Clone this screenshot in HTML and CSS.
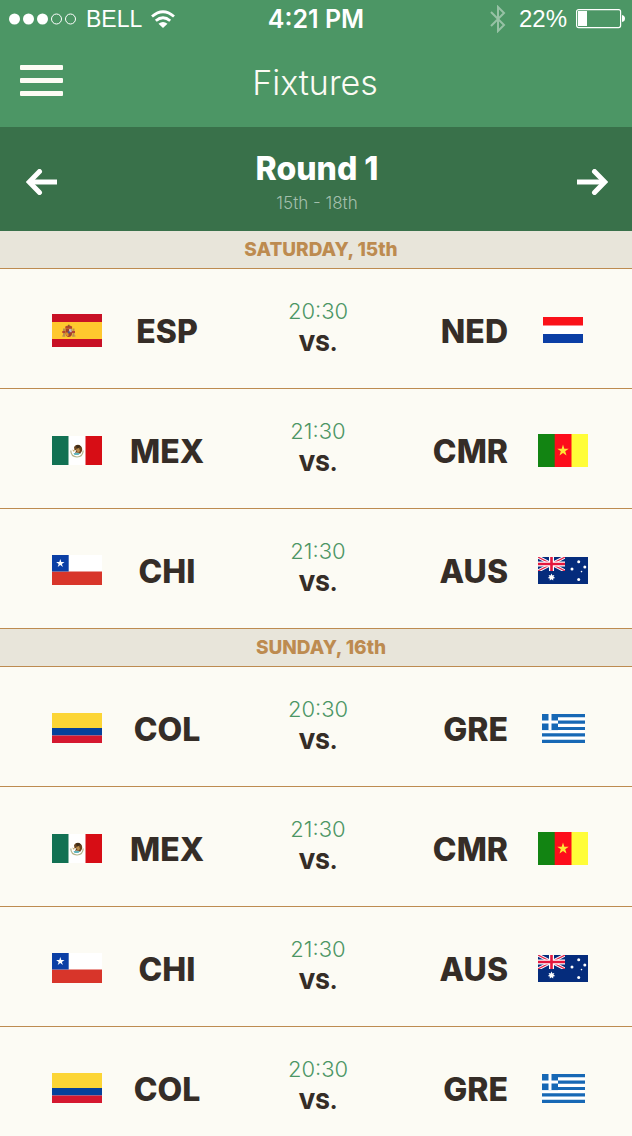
FILE: index.html
```
<!DOCTYPE html>
<html lang="en">
<head>
<meta charset="utf-8">
<meta name="viewport" content="width=device-width, initial-scale=1">
<title>Fixtures</title>
<link rel="stylesheet" href="styles.css">
</head>
<body>
<svg class="sprite" width="0" height="0" aria-hidden="true">
  <symbol id="esp" viewBox="0 0 50 33">
    <path fill="#c81125" d="M0 0h50v33H0z"/>
    <path fill="#ffc82e" d="M0 8h50v17H0z"/>
    <path fill="#b98f4e" d="M11 14.500h2v8h-2zM20.500 14.500h2v8h-2z"/>
    <path fill="#b5452f" d="M10.300 17h3v2h-3zM20 17h3v2h-3zM13.300 12.500q3.400-2.200 6.800 0v2h-6.800z"/>
    <path fill="#a3402c" d="M13.500 14.500h6.500v5.500q-.5 3-3.200 3t-3.300-3z"/>
    <path fill="#c9b9bb" d="M17 15h2.700v3.200H17z"/>
    <path fill="#d9962c" d="M13.800 18.500h2.700v3.500h-1.500q-1.200-1-1.200-3.500z"/>
    <path fill="#4c5a8c" d="M15.800 17.300h2v2h-2z"/>
    <path fill="#8a5a2a" d="M16 10.800h1.500v2H16z"/>
    <path fill="#b98f4e" d="M10 21.500h3.500v1H10zM20 21.500h3.500v1H20z"/>
  </symbol>
  <symbol id="ned" viewBox="0 0 40 26">
    <path fill="#fff" d="M0 0h40v26H0z"/>
    <path fill="#fa1119" d="M0 0h40v8.500H0z"/>
    <path fill="#0b3ea5" d="M0 17h40v9H0z"/>
  </symbol>
  <symbol id="mex" viewBox="0 0 50 29">
    <path fill="#fff" d="M0 0h50v29H0z"/>
    <path fill="#127153" d="M0 0h16.500v29H0z"/>
    <path fill="#d70d15" d="M33.500 0H50v29H33.500z"/>
    <path fill="none" stroke="#b3b58c" stroke-width="1.200" d="M18.800 14.500q0 6 6.200 6.500 6-.5 6.200-6.500"/>
    <path fill="#6b4520" d="M22 11q2-3 5.500-2 3.500 2 2.500 6l-2 3-3-1.500-2 .5 1.500-3-2 .5z"/>
    <path fill="#3c2b18" d="M24 9.500q3-1.500 5 1.500l-2 .5-2 2z"/>
    <path fill="#b98c4c" d="M24 13l3-1 1 3-2 2z"/>
    <path fill="#63b6bd" d="M21.500 17h6.500l-1.500 2h-4z"/>
    <path fill="#c9a65c" d="M20 13.500l2.500 1-.5 1.500z"/>
  </symbol>
  <symbol id="cmr" viewBox="0 0 50 33">
    <path fill="#128412" d="M0 0h17v33H0z"/>
    <path fill="#fd0d1b" d="M16.700 0H34v33H16.700z"/>
    <path fill="#fffd38" d="M33.500 0H50v33H33.500z"/>
    <path fill="#ffe635" d="M25 10.500l1.300 4.200h4.400l-3.500 2.600 1.300 4.200-3.500-2.600-3.500 2.600 1.300-4.200-3.500-2.600h4.400z"/>
  </symbol>
  <symbol id="chi" viewBox="0 0 50 30">
    <path fill="#fff" d="M0 0h50v30H0z"/>
    <path fill="#d8352a" d="M0 16.500h50V30H0z"/>
    <path fill="#0b3fa5" d="M0 0h16.700v16.500H0z"/>
    <path fill="#fff" d="M8.300 4l1 3h3.200l-2.600 1.900 1 3.100-2.600-1.900L5.700 12l1-3.100L4.100 7h3.200z"/>
  </symbol>
  <symbol id="aus" viewBox="0 0 50 27">
    <path fill="#052c7c" d="M0 0h50v27H0z"/>
    <svg width="27" height="14" viewBox="0 0 27 14">
      <path stroke="#fff" stroke-width="3.200" d="M0 0l27 14M27 0L0 14"/>
      <path stroke="#e4244a" stroke-width="1.200" d="M0 0l27 14M27 0L0 14"/>
      <path stroke="#fff" stroke-width="5" d="M13.500 0v14M0 7h27"/>
      <path stroke="#e4173d" stroke-width="2.600" d="M13.500 0v14M0 7h27"/>
    </svg>
    <path fill="#fff" d="M13.500 16.500l.9 1.900 2-.5-.9 1.900 1.700 1.200-2 .5v2.100l-1.700-1.300-1.700 1.300v-2.100l-2-.5 1.700-1.200-.9-1.900 2 .5z"/>
    <circle cx="40.700" cy="4.700" r="1.500" fill="#fff"/>
    <circle cx="34" cy="12" r="1.500" fill="#fff"/>
    <circle cx="46.800" cy="10" r="1.500" fill="#fff"/>
    <circle cx="43.500" cy="14.600" r=".8" fill="#fff"/>
    <circle cx="40.700" cy="22.600" r="1.500" fill="#fff"/>
  </symbol>
  <symbol id="col" viewBox="0 0 50 30">
    <path fill="#fcd535" d="M0 0h50v15H0z"/>
    <path fill="#06419b" d="M0 15h50v7.500H0z"/>
    <path fill="#d5182f" d="M0 22.500h50V30H0z"/>
  </symbol>
  <symbol id="gre" viewBox="0 0 43 29">
    <path fill="#fff" d="M0 0h43v29H0z"/>
    <path stroke="#1768b5" stroke-width="3.200" d="M0 1.600h43M0 8.050h43M0 14.500h43M0 20.950h43M0 27.400h43"/>
    <path fill="#1768b5" d="M0 0h16v16.100H0z"/>
    <path stroke="#fff" stroke-width="3" d="M8 0v16.100M0 8h16"/>
  </symbol>
</svg>

<div class="app">
  <header class="topbar">
    <div class="status">
      <div class="status-left">
        <svg width="68" height="12" viewBox="0 0 68 12" role="img" aria-label="Signal strength">
          <g fill="#fff"><circle cx="5.500" cy="6" r="5.500"/><circle cx="19.500" cy="6" r="5.500"/><circle cx="33.500" cy="6" r="5.500"/></g>
          <g fill="none" stroke="#fff"><circle cx="47.500" cy="6" r="5"/><circle cx="61.500" cy="6" r="5"/></g>
        </svg>
        <span class="carrier">BELL</span>
        <svg width="24" height="18" viewBox="0 0 24 18" role="img" aria-label="Wi-Fi">
          <g fill="none" stroke="#fff" stroke-width="2.800"><path d="M1 6.500q11-9.500 22 0"/><path d="M4.800 10.800q7.200-6.200 14.400 0"/></g>
          <path fill="#fff" d="M7.500 13.700q4.500-3.600 9 0L12 18z"/>
        </svg>
      </div>
      <span class="clock">4:21 PM</span>
      <div class="status-right">
        <svg width="20" height="28" viewBox="0 0 20 28" role="img" aria-label="Bluetooth">
          <path fill="none" stroke="#fff" stroke-opacity=".42" stroke-width="2" d="M1 7l13 13-6 6V2l6 6L1 21"/>
        </svg>
        <span>22%</span>
        <svg width="50" height="20" viewBox="0 0 50 20" role="img" aria-label="Battery">
          <rect x=".6" y=".6" width="44" height="18" rx="2" fill="none" stroke="#fff" stroke-width="1.200"/>
          <path fill="#fff" d="M2 2h9v15H2zM46 6q3 .5 3 3.500T46 13z"/>
        </svg>
      </div>
    </div>
    <div class="nav">
      <button class="icon-button" type="button" aria-label="Menu">
        <svg width="43" height="31" viewBox="0 0 43 31"><g fill="#fcfbf4"><rect width="43" height="5" rx="1"/><rect y="13" width="43" height="5" rx="1"/><rect y="26" width="43" height="5" rx="1"/></g></svg>
      </button>
      <h1 class="title">Fixtures</h1>
    </div>
  </header>

  <section class="round">
    <button class="icon-button" type="button" aria-label="Previous round">
      <svg width="32" height="26" viewBox="0 0 32 26"><path fill="none" stroke="#fff" stroke-width="5" d="M31 13H5"/><path fill="none" stroke="#fff" stroke-width="5" stroke-linecap="round" d="M13.500 2.500L3.200 13l10.300 10.500"/></svg>
    </button>
    <div class="round-label">
      <h2 class="round-name">Round 1</h2>
      <p class="round-dates">15th - 18th</p>
    </div>
    <button class="icon-button" type="button" aria-label="Next round">
      <svg width="32" height="26" viewBox="0 0 32 26"><path fill="none" stroke="#fff" stroke-width="5" d="M1 13h26"/><path fill="none" stroke="#fff" stroke-width="5" stroke-linecap="round" d="M18.500 2.500L28.800 13 18.500 23.500"/></svg>
    </button>
  </section>

  <main class="fixtures">
    <section>
      <h3 class="day">SATURDAY, 15th</h3>
      <ul class="matches">
        <li class="match">
          <svg class="flag" width="50" height="33"><use href="#esp"/></svg><span class="team">ESP</span>
          <div class="kickoff"><time>20:30</time><b>VS.</b></div>
          <span class="team away">NED</span><svg class="flag" width="40" height="26"><use href="#ned"/></svg>
        </li>
        <li class="match">
          <svg class="flag" width="50" height="29"><use href="#mex"/></svg><span class="team">MEX</span>
          <div class="kickoff"><time>21:30</time><b>VS.</b></div>
          <span class="team away">CMR</span><svg class="flag" width="50" height="33"><use href="#cmr"/></svg>
        </li>
        <li class="match">
          <svg class="flag" width="50" height="30"><use href="#chi"/></svg><span class="team">CHI</span>
          <div class="kickoff"><time>21:30</time><b>VS.</b></div>
          <span class="team away">AUS</span><svg class="flag" width="50" height="27"><use href="#aus"/></svg>
        </li>
      </ul>
    </section>
    <section>
      <h3 class="day">SUNDAY, 16th</h3>
      <ul class="matches">
        <li class="match">
          <svg class="flag" width="50" height="30"><use href="#col"/></svg><span class="team">COL</span>
          <div class="kickoff"><time>20:30</time><b>VS.</b></div>
          <span class="team away">GRE</span><svg class="flag" width="43" height="29"><use href="#gre"/></svg>
        </li>
        <li class="match">
          <svg class="flag" width="50" height="29"><use href="#mex"/></svg><span class="team">MEX</span>
          <div class="kickoff"><time>21:30</time><b>VS.</b></div>
          <span class="team away">CMR</span><svg class="flag" width="50" height="33"><use href="#cmr"/></svg>
        </li>
        <li class="match">
          <svg class="flag" width="50" height="30"><use href="#chi"/></svg><span class="team">CHI</span>
          <div class="kickoff"><time>21:30</time><b>VS.</b></div>
          <span class="team away">AUS</span><svg class="flag" width="50" height="27"><use href="#aus"/></svg>
        </li>
        <li class="match">
          <svg class="flag" width="50" height="30"><use href="#col"/></svg><span class="team">COL</span>
          <div class="kickoff"><time>20:30</time><b>VS.</b></div>
          <span class="team away">GRE</span><svg class="flag" width="43" height="29"><use href="#gre"/></svg>
        </li>
      </ul>
    </section>
  </main>
</div>
</body>
</html>
```
FILE: styles.css
```
* {
  box-sizing: border-box;
}

body,
h1,
h2,
h3,
p,
ul {
  margin: 0;
  padding: 0;
}

body {
  font-family: Inter, "Liberation Sans", sans-serif;
  color: #352d27;
  background: #fcfbf4;
}

svg {
  display: block;
}

.sprite {
  position: absolute;
}

.app {
  display: flex;
  flex-direction: column;
  height: 100vh;
}

.topbar {
  flex: none;
  color: #fff;
  background: #4c9665;
}

.status {
  display: grid;
  grid-template-columns: 1fr auto 1fr;
  align-items: center;
  height: 38px;
  padding: 0 9px;
  font: 24px/38px "Liberation Sans", sans-serif;
}

.status-left,
.status-right {
  display: flex;
  align-items: center;
  gap: 9px;
}

.carrier {
  font-size: 23px;
}

.status-right {
  justify-content: flex-end;
  margin-right: -3px;
}

.clock {
  font-family: Inter, sans-serif;
  font-size: 25px;
  font-weight: 600;
}

.nav {
  display: grid;
  grid-template-columns: 43px 1fr 45px;
  align-items: center;
  padding: 0 20px;
}

.icon-button {
  padding: 0 0 4px;
  border: 0;
  background: none;
  cursor: pointer;
}

.title {
  font-size: 34px;
  font-weight: 300;
  line-height: 89px;
  text-align: center;
  color: #fcfbf4;
}

.round {
  display: flex;
  flex: none;
  align-items: center;
  justify-content: space-between;
  padding: 21px 24px 15px 26px;
  color: #fff;
  background: #39714a;
}

.round .icon-button {
  padding-bottom: 0;
}

.round-label {
  text-align: center;
}

.round-name {
  font-size: 32px;
  font-weight: 800;
  line-height: 42px;
}

.round-dates {
  font-size: 17px;
  font-weight: 300;
  line-height: 26px;
  color: #a3bfac;
}

.fixtures {
  flex: 1;
  min-height: 0;
  overflow-y: auto;
  scrollbar-width: none;
}

.day {
  padding: 1px 0 0 10px;
  border-bottom: 1px solid #bd8b50;
  font-size: 19px;
  font-weight: 800;
  line-height: 36px;
  text-align: center;
  color: #bd8b50;
  background: #e8e5da;
}

.matches {
  list-style: none;
}

.match {
  display: grid;
  grid-template-columns: 50px 130px 1fr 132px 50px;
  align-items: center;
  height: 120px;
  padding: 26px 44px 23px 52px;
  border-bottom: 1px solid #bd8b50;
}

.flag {
  justify-self: center;
}

.team {
  padding-top: 3px;
  font-size: 32px;
  font-weight: 800;
  line-height: 40px;
  text-align: center;
}

.away {
  padding-right: 30px;
  text-align: right;
}

.kickoff {
  display: grid;
  align-self: start;
  padding-right: 2px;
  font-size: 22px;
  line-height: 32px;
  text-align: center;
}

.kickoff time {
  font-weight: 300;
  color: #4c9665;
}

.kickoff b {
  font-weight: 800;
}
```
